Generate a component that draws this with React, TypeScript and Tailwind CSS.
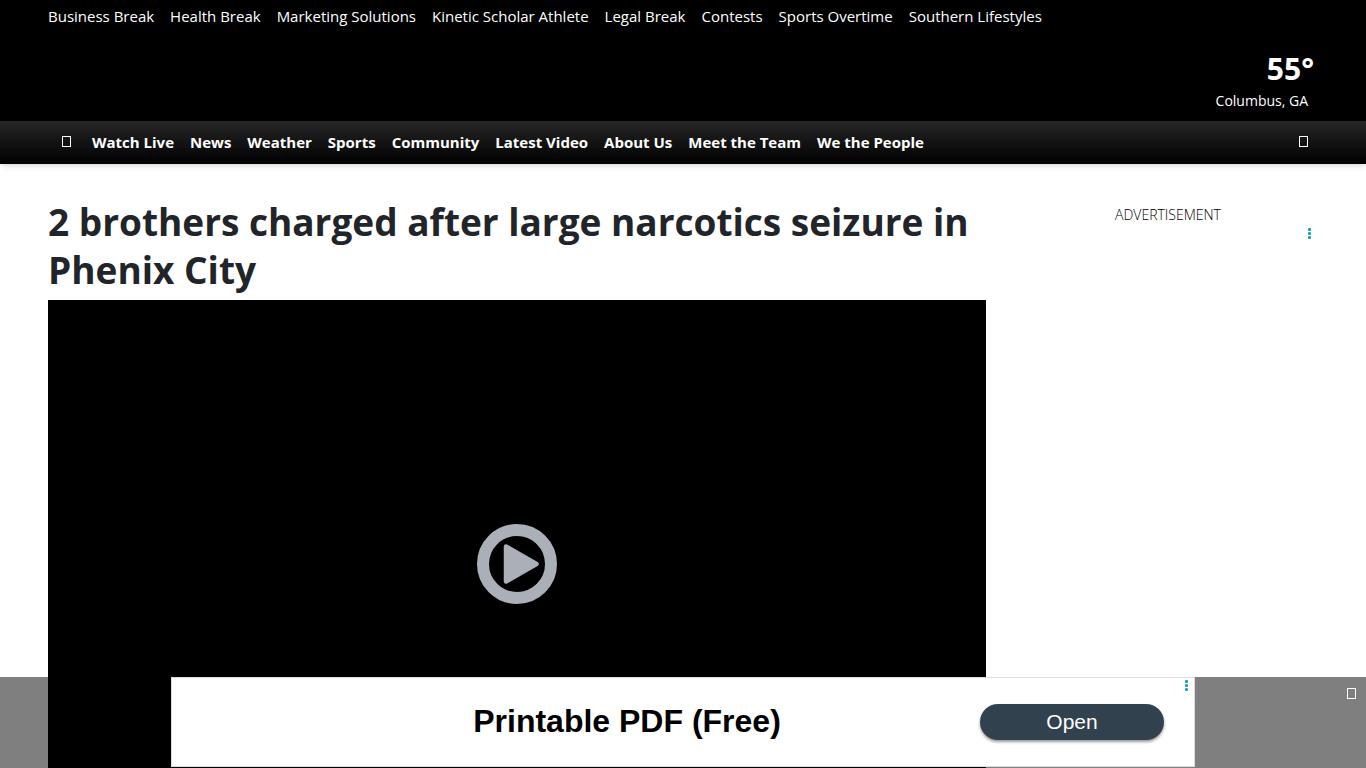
import { useState } from "react";

const topLinks = [
  "Business Break",
  "Health Break",
  "Marketing Solutions",
  "Kinetic Scholar Athlete",
  "Legal Break",
  "Contests",
  "Sports Overtime",
  "Southern Lifestyles",
];

const mainLinks = [
  "Watch Live",
  "News",
  "Weather",
  "Sports",
  "Community",
  "Latest Video",
  "About Us",
  "Meet the Team",
  "We the People",
];

function GlyphBox() {
  return <span className="block h-[11px] w-[9px] border border-white" />;
}

function AdDots() {
  return (
    <svg width="3" height="11" viewBox="0 0 3 11" fill="#1a9fb8" aria-hidden="true">
      <circle cx="1.5" cy="1.5" r="1.6" />
      <circle cx="1.5" cy="5.5" r="1.6" />
      <circle cx="1.5" cy="9.5" r="1.6" />
    </svg>
  );
}

function Header() {
  return (
    <header className="bg-black text-white">
      <nav aria-label="Sections" className="flex gap-4 px-12 pt-1 text-[15px] leading-6">
        {topLinks.map((label) => (
          <a key={label} href="#" className="whitespace-nowrap">
            {label}
          </a>
        ))}
      </nav>

      <div className="flex h-[93px] flex-col items-end px-12 pt-[23px]">
        <p className="pr-1 text-[30px] leading-9 font-bold">55°</p>
        <p className="pt-1 pr-[10px] text-[14px] leading-5">Columbus, GA</p>
      </div>

      <nav
        aria-label="Main"
        className="flex h-[43px] items-center bg-linear-to-b/srgb from-[#262626] to-black px-12 pb-[2px] shadow-md"
      >
        <a href="#" aria-label="Home" className="pr-[21px] pl-[14px]">
          <GlyphBox />
        </a>
        <div className="flex gap-4 text-[15px] leading-6 font-bold">
          {mainLinks.map((label) => (
            <a key={label} href="#" className="whitespace-nowrap">
              {label}
            </a>
          ))}
        </div>
        <button type="button" aria-label="Search" className="mr-[10px] ml-auto">
          <GlyphBox />
        </button>
      </nav>
    </header>
  );
}

function VideoPlayer() {
  return (
    <div className="flex aspect-video items-center justify-center bg-black">
      <button type="button" aria-label="Play video">
        <svg width="80" height="80" viewBox="0 0 80 80" aria-hidden="true">
          <circle cx="40" cy="40" r="34" fill="none" stroke="#abb0b8" strokeWidth="12" />
          <path
            d="M29 22.5 L59.5 40 L29 57.5 Z"
            fill="#abb0b8"
            stroke="#abb0b8"
            strokeWidth="4.5"
            strokeLinejoin="round"
          />
        </svg>
      </button>
    </div>
  );
}

function StickyAd({ onClose }: { onClose: () => void }) {
  return (
    <div className="fixed inset-x-0 bottom-0 flex h-[91px] justify-center bg-black/50">
      <div className="relative flex h-[90px] w-full max-w-[1024px] items-center justify-end border border-[#dddddd] bg-white pr-[30px] font-['Liberation_Sans',sans-serif]">
        <p className="flex-1 pb-[2px] pl-[102px] text-center text-[32px] leading-10 font-bold text-black">
          Printable PDF (Free)
        </p>
        <button
          type="button"
          className="h-9 w-[184px] rounded-full bg-[#32414e] text-[21px] leading-6 text-white shadow-[0_2px_3px_rgba(0,0,0,0.4)]"
        >
          Open
        </button>
        <button type="button" aria-label="Ad options" className="absolute top-[2px] right-[6px]">
          <AdDots />
        </button>
      </div>
      <button
        type="button"
        aria-label="Close ad"
        onClick={onClose}
        className="absolute top-[11px] right-[10px]"
      >
        <GlyphBox />
      </button>
    </div>
  );
}

export default function App() {
  const [adOpen, setAdOpen] = useState(true);

  return (
    <div className="h-screen overflow-hidden bg-white font-['Open_Sans','Noto_Sans',sans-serif] text-[#212529]">
      <Header />
      <main className="flex gap-8 px-12 pt-[34px]">
        <article className="min-w-0 flex-1">
          <h1 className="pb-[6px] text-[37px] leading-12 font-bold">
            2 brothers charged after large narcotics seizure in Phenix City
          </h1>
          <VideoPlayer />
        </article>
        <aside className="flex w-[300px] flex-col pt-[7px]">
          <p className="text-center text-[14px] leading-5 font-light text-black">ADVERTISEMENT</p>
          <button type="button" aria-label="Ad options" className="mt-[3px] mr-[7px] self-end">
            <AdDots />
          </button>
        </aside>
      </main>
      {adOpen && <StickyAd onClose={() => setAdOpen(false)} />}
    </div>
  );
}
